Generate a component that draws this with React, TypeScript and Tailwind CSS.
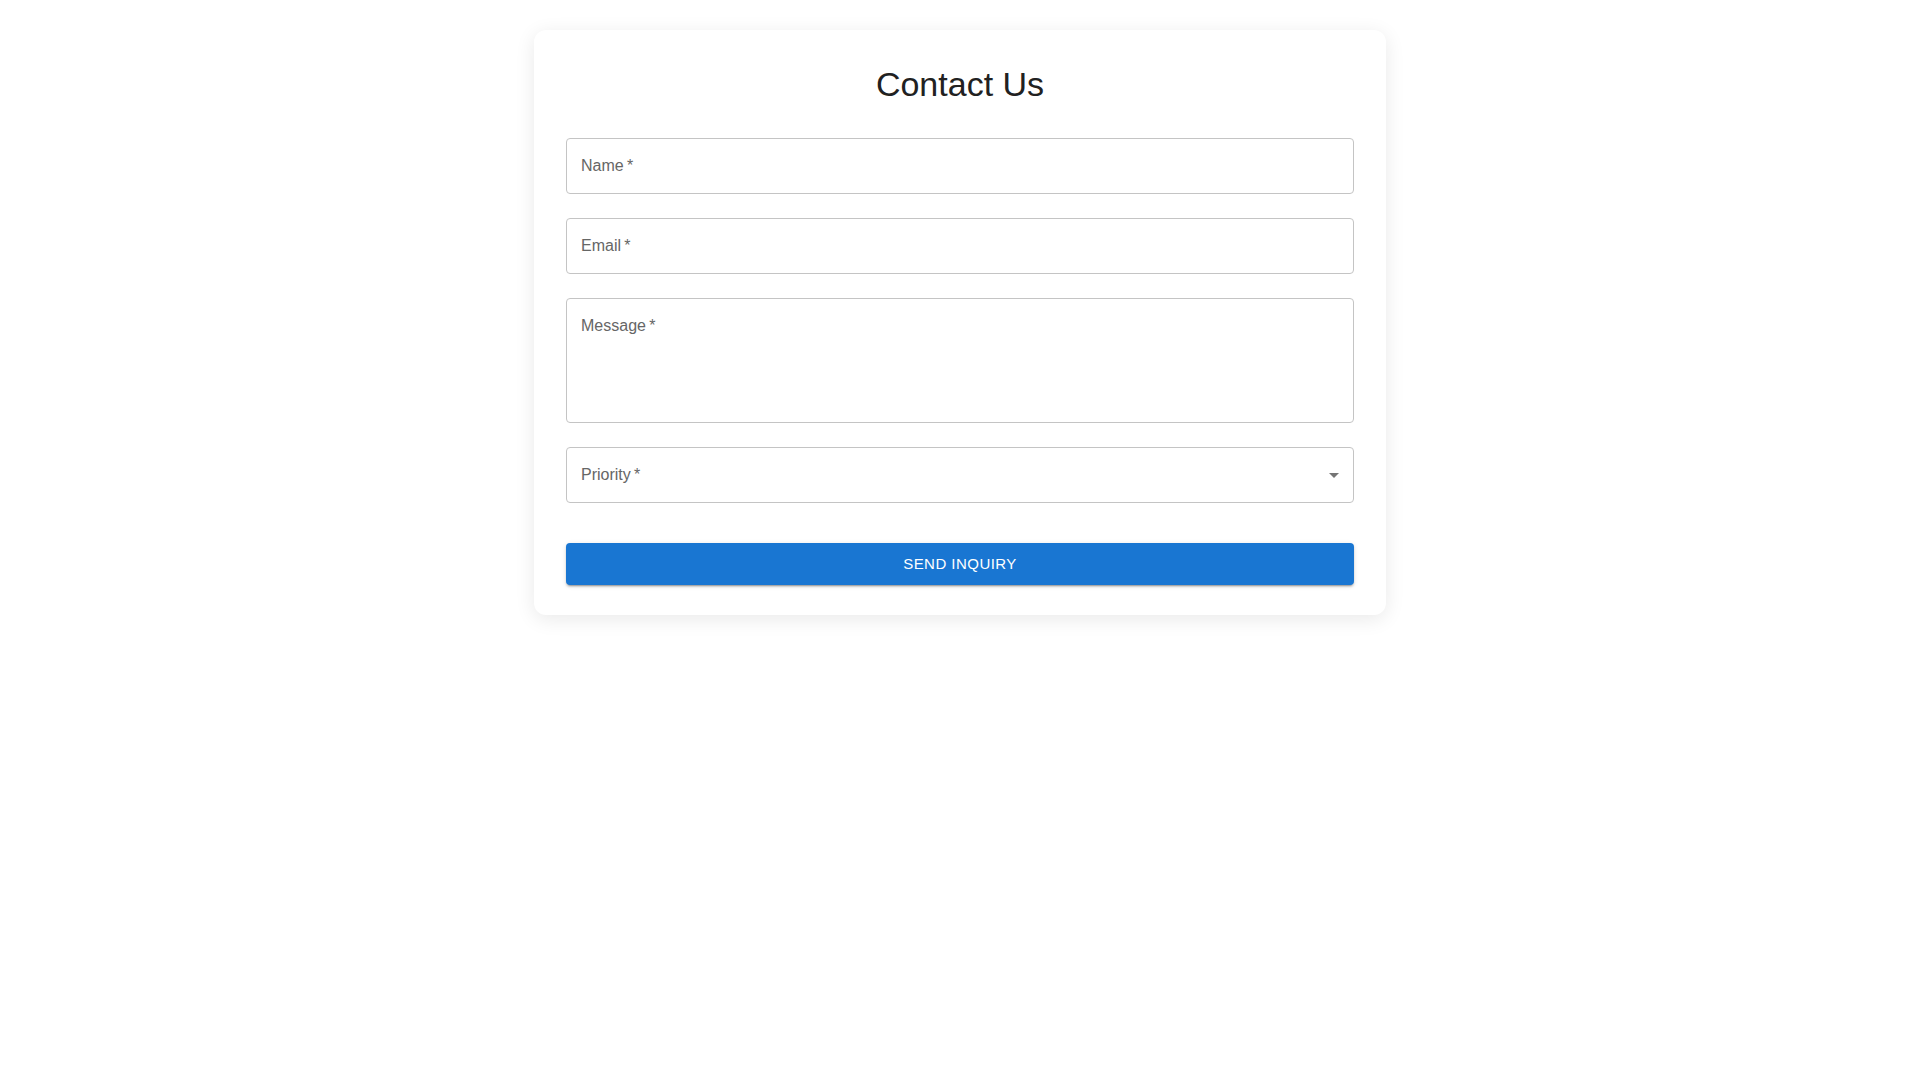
import React from 'react';

function Field({ label }: { label: string }) {
  return (
    <input
      type="text"
      placeholder={label}
      className="h-[56px] w-full rounded border border-[#c4c4c4] bg-white px-[14px] text-base text-[#212121] outline-none placeholder:text-[#666666]"
    />
  );
}

export default function App() {
  return (
    <div className="min-h-screen bg-white pt-[30px] font-['Liberation_Sans',Arial,sans-serif]">
      <div className="mx-auto w-[852px] rounded-xl bg-white px-8 pt-[33px] pb-[30px] shadow-[0_4px_20px_rgba(0,0,0,0.09)]">
        <h1 className="text-center text-[34px] leading-[42px] text-[#212121]">Contact Us</h1>

        <form className="mt-[33px] flex flex-col" onSubmit={e => e.preventDefault()}>
          <div className="flex flex-col gap-6">
            <Field label={'Name\u2009*'} />
            <Field label={'Email\u2009*'} />
            <textarea
              rows={4}
              placeholder={'Message\u2009*'}
              className="h-[125px] w-full resize-none rounded border border-[#c4c4c4] bg-white px-[14px] pt-[15px] pb-[18px] text-base leading-[23px] text-[#212121] outline-none placeholder:text-[#666666]"
            />
            <div className="relative flex h-[56px] w-full items-center rounded border border-[#c4c4c4] bg-white px-[14px] text-base text-[#666666]">
              <span>{'Priority\u2009*'}</span>
              <svg
                viewBox="0 0 24 24"
                className="absolute right-[7px] top-1/2 h-6 w-6 -translate-y-1/2 fill-[#757575]"
              >
                <path d="M7 10l5 5 5-5z" />
              </svg>
            </div>
          </div>

          <button
            type="submit"
            className="mt-[40px] h-[42px] w-full rounded bg-[#1976d2] text-[15px] uppercase tracking-[0.46px] text-white shadow-[0_3px_1px_-2px_rgba(0,0,0,0.2),0_2px_2px_0_rgba(0,0,0,0.14),0_1px_5px_0_rgba(0,0,0,0.12)]"
          >
            Send Inquiry
          </button>
        </form>
      </div>
    </div>
  );
}
